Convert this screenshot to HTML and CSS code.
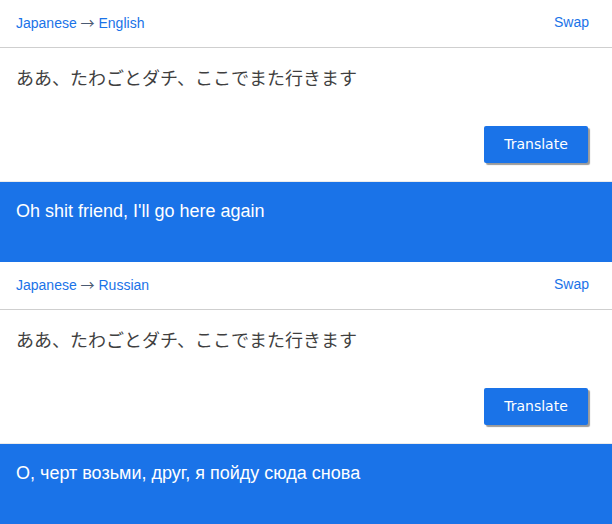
FILE: index.html
```html
<!DOCTYPE html>
<html lang="ja">
<head>
<meta charset="utf-8">
<link rel="stylesheet" href="styles.css">
</head>
<body>
  <section class="card">
    <div class="card-head">
      <a class="lang">Japanese <span class="arrow">→</span> English</a>
      <a class="swap">Swap</a>
    </div>
    <div class="card-input">
      <div class="source">ああ、たわごとダチ、ここでまた行きます</div>
      <div class="actions"><button class="btn">Translate</button></div>
    </div>
    <div class="result">Oh shit friend, I'll go here again</div>
  </section>
  <section class="card">
    <div class="card-head">
      <a class="lang">Japanese <span class="arrow">→</span> Russian</a>
      <a class="swap">Swap</a>
    </div>
    <div class="card-input">
      <div class="source">ああ、たわごとダチ、ここでまた行きます</div>
      <div class="actions"><button class="btn">Translate</button></div>
    </div>
    <div class="result">О, черт возьми, друг, я пойду сюда снова</div>
  </section>
</body>
</html>
```

FILE: styles.css
```css
html, body {
  margin: 0;
  padding: 0;
  background: #fff;
}
body {
  font-family: "Liberation Sans", Arial, sans-serif;
}
.card {
  display: flex;
  flex-direction: column;
}
.card-head {
  height: 48px;
  box-sizing: border-box;
  padding: 0 23px 3px 16px;
  display: flex;
  align-items: center;
  justify-content: space-between;
  border-bottom: 1px solid #cfcfcf;
  font-size: 14px;
  line-height: 16px;
  color: #1a73e8;
}
.card-head a {
  color: #1a73e8;
  text-decoration: none;
}
.arrow {
  font-family: "Noto Sans CJK JP", sans-serif;
  font-size: 14px;
  line-height: 16px;
  color: #4a5a72;
}
.card-input {
  height: 134px;
  box-sizing: border-box;
  padding: 16px 24px 0 16px;
  display: flex;
  flex-direction: column;
  border-bottom: 1px solid #ebebeb;
}
.source {
  font-family: "Noto Sans CJK JP", sans-serif;
  font-size: 18px;
  line-height: 26px;
  color: #3f3f3f;
}
.actions {
  display: flex;
  justify-content: flex-end;
  margin-top: 36px;
}
.btn {
  font-family: "DejaVu Sans", sans-serif;
  font-size: 14px;
  line-height: 17px;
  color: #fff;
  background: #1a73e8;
  border: none;
  border-radius: 2px;
  padding: 10px 20px;
  width: 104px;
  height: 37px;
  box-shadow: 2px 2px 1px #9a9a9a;
}
.result {
  height: 80px;
  box-sizing: border-box;
  padding: 19px 16px 0 16px;
  background: #1a73e8;
  color: #fff;
  font-size: 18px;
  line-height: 21px;
}
```
